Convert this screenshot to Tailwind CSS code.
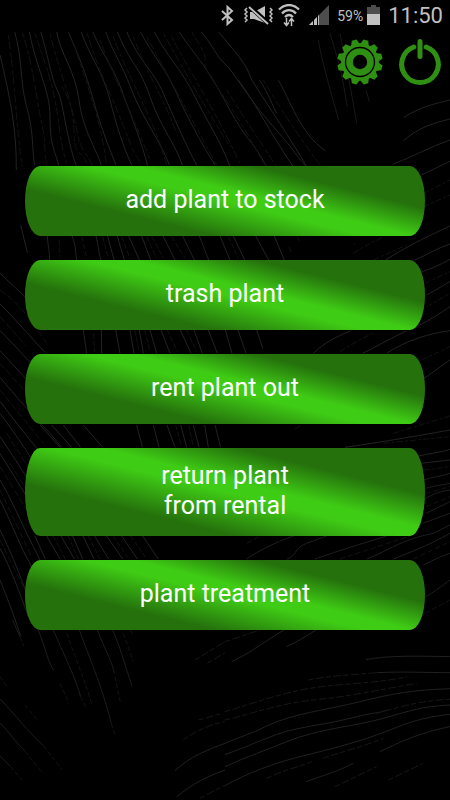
<!DOCTYPE html>
<html lang="en">
<head>
    <meta charset="UTF-8">
    <meta name="viewport" content="width=device-width, initial-scale=1.0">
    <title>Plant Stock</title>
    <script src="https://cdn.jsdelivr.net/npm/@tailwindcss/browser@4"></script>
</head>
<body class="bg-black font-[Roboto,sans-serif] text-white">
    <div class="relative isolate min-h-screen overflow-hidden">

        <!-- Leaf vein background -->
        <svg class="absolute inset-0 -z-10 h-full w-full" viewBox="0 0 1350 2400" preserveAspectRatio="xMidYMin slice" fill="none" stroke="#222222" stroke-width="3" aria-hidden="true">
            <!-- top left fan -->
            <path d="M0 165C30 290 50 390 49 510M44 95C70 190 58 240 80 320S95 440 104 495M88 95C110 210 150 270 150 350S160 440 176 495M122 95C145 170 155 240 172 270S200 420 228 495M170 95C180 160 225 210 237 300S285 440 304 495M205 95C240 180 255 210 280 300S330 450 348 495M243 95C270 170 310 220 330 300S370 440 395 495M278 95C310 170 340 200 365 270S430 440 442 495M317 95C340 160 360 180 395 270S480 420 508 495M352 95C390 190 420 200 450 290S520 420 547 495M380 95C420 190 460 210 490 280S560 440 590 495M421 95C460 170 500 210 530 280S610 440 645 495M463 95C500 170 540 200 585 290S660 420 690 500M538 95C570 150 610 180 675 303S750 410 800 500M604 95C640 140 650 170 676 193S740 290 820 380S880 460 920 500M715 240C760 300 830 430 880 500M755 240C800 310 880 430 918 496M655 95C700 150 740 190 755 240M778 240C800 270 810 300 830 340M835 240C870 300 900 400 977 453"/>
            <path stroke="#131313" stroke-dasharray="14 6 24 9" d="M25 105C45 240 45 340 66 500M68 100C100 200 110 300 125 370S130 440 140 490M105 100C130 180 150 220 165 300S180 430 200 490M150 100C180 230 220 300 222 390S240 440 260 490M186 260C215 310 222 350 232 400S262 460 276 495M225 140C250 230 300 340 320 495M262 100C300 230 330 270 375 390S410 450 420 495M300 120C340 230 400 350 450 480M340 110C380 220 430 300 480 430L500 495M400 110C440 220 480 270 530 400M440 110C490 200 560 330 620 440L650 495M490 100C540 190 620 330 690 440M515 110C560 200 640 320 720 490M575 95C600 140 620 160 615 190S700 310 790 490M680 270C730 350 790 440 830 500M790 240C830 310 890 400 960 495"/>
            <!-- strands under the toolbar icons -->
            <path stroke="#181818" d="M955 120C965 180 985 250 1016 360M990 100C1005 150 1018 190 1028 240L1042 320M1020 100C1035 180 1050 250 1070 370M1098 270L1108 305"/>
            <!-- strands between the first buttons -->
            <path d="M62 675L82 758M142 708C144 740 150 760 148 780M216 708C228 735 226 755 230 780M288 708C296 740 296 760 303 780M323 708L342 780M352 708L373 780M386 708L418 780M425 708L452 780M489 708L525 780M548 708L583 780M598 708L626 780M660 708L690 780M700 708L734 780M767 708L806 780M823 708L853 780M250 990L260 1060M304 990L305 1060M347 990L360 1060M390 990L402 1060M418 990L430 1060M450 990L470 1060M483 990L510 1060M541 990L573 1060M582 990L607 1060M625 990L652 1060M676 990L696 1060M714 990L738 1060M770 990L788 1045M410 1275L427 1342M460 1275L477 1342M501 1275L525 1342M542 1275L560 1342M580 1275L597 1342M614 1275L625 1342M645 1275L662 1342"/>
            <path stroke="#131313" stroke-dasharray="16 6" d="M178 720L180 770M246 710L260 775M308 710L325 775M365 710L390 775M440 710L470 775M456 710L490 775M515 710L555 775M685 710L715 775M892 710L902 730M867 740L873 755M280 1000L284 1055M405 990L417 1055M434 990L450 1055M502 990L532 1055M560 990L590 1055M527 1275L545 1340M566 1275L580 1340"/>
            <!-- left edge -->
            <path d="M0 820L75 890M0 912C40 950 90 1010 135 1057M0 992C50 1040 90 1090 130 1130M0 1052L95 1155M0 1132C50 1190 90 1240 150 1300L185 1342M0 1204C50 1270 90 1320 130 1370M0 1240C60 1320 90 1370 110 1400M0 1310C40 1370 60 1400 85 1440M0 1360L80 1490M120 1275L180 1342M190 1275L242 1342M250 1275L308 1342M155 1275L215 1342M0 1440C30 1490 60 1560 100 1640L120 1680M0 1500C40 1580 60 1640 95 1700M0 1590C30 1650 50 1700 80 1780M0 1645C30 1700 60 1780 85 1850M0 1740C20 1790 40 1840 62 1908"/>
            <path stroke="#131313" stroke-dasharray="20 8" d="M0 870C60 910 100 970 140 1030M0 950L80 1040M0 1090L90 1190M0 1170L130 1330M20 1300L90 1410M0 1400L80 1530M0 1470L95 1670M0 1620L75 1770M30 1390L80 1470"/>
            <!-- below the fourth button -->
            <path d="M105 1608L136 1677M140 1608L180 1677M183 1608L223 1677M218 1608L248 1677M249 1608L282 1677M284 1608L326 1677M320 1608L368 1677M365 1608L412 1677M428 1608L475 1677"/>
            <path stroke="#131313" stroke-dasharray="15 6" d="M160 1608L196 1677M204 1608L236 1677M265 1608L300 1677M340 1608L386 1677M392 1608L440 1677M422 1320L430 1342M520 1330L526 1342"/>
            <!-- bottom left -->
            <path stroke="#1c1c1c" d="M38 1860L60 1910M115 1890C135 1940 145 1990 162 2012M160 1890C190 1960 225 2030 242 2090M238 1890C270 1980 300 2040 334 2170M292 1890C315 1950 335 1980 343 2020M338 1890C360 1940 370 1980 396 2058M0 2096C50 2150 80 2190 130 2237M0 2168C30 2200 50 2230 75 2254M0 2268L32 2300"/>
            <path stroke="#131313" stroke-dasharray="14 7" d="M60 1910L72 1940M200 1900C225 1970 250 2030 275 2110M180 2050L207 2110M242 2090L260 2125M345 2030L362 2112M334 2170L345 2205M370 1900L400 1985M392 1890L402 1910M75 2115L112 2160M130 2237L185 2307M75 2254L128 2320M0 2030L20 2058M32 2300L66 2340"/>
            <!-- right edge -->
            <path d="M1212 352C1260 320 1310 310 1350 300M1210 422C1260 380 1300 370 1350 357M1180 492C1240 470 1290 440 1350 420M1262 526L1350 484M1156 780C1220 740 1280 710 1350 678M1245 780C1280 765 1310 745 1350 732M1265 816C1295 805 1320 795 1350 778M1280 885L1350 845M1250 980C1290 960 1320 940 1350 920M940 1060C970 1030 1010 1010 1050 993M1088 1060C1130 1040 1180 1010 1220 993M1160 1060C1220 1020 1290 1000 1350 992M1272 1135L1350 1080M1035 1342C1120 1330 1240 1310 1350 1290M1255 1368C1290 1360 1320 1358 1350 1348M1262 1390L1350 1380"/>
            <path stroke="#131313" stroke-dasharray="18 7 9 6" d="M1270 580L1350 540M1270 620L1350 585M1060 760C1090 740 1110 730 1148 712M1060 735L1065 730M1120 780L1220 735M1275 850L1350 815M1280 920L1350 880M1020 1055C1050 1035 1080 1020 1120 998M1265 1080L1350 1040M885 1287L905 1275M1180 1300L1350 1248M1270 1410L1350 1400M1150 1330L1350 1310"/>
            <path stroke="#1e1e1e" d="M1272 1440C1300 1430 1320 1430 1350 1420M1278 1465C1310 1455 1330 1455 1350 1450M1270 1500C1300 1480 1320 1475 1350 1470M1278 1540L1350 1505M1268 1570L1350 1540M740 1677C780 1650 820 1630 880 1608M860 1677C890 1670 880 1645 920 1630S960 1615 980 1608M945 1677C1020 1650 1090 1630 1160 1608M1100 1677C1170 1650 1200 1620 1300 1600L1350 1575M1180 1677C1220 1660 1280 1640 1350 1600M1270 1695C1300 1680 1320 1670 1350 1660M1278 1790C1310 1770 1330 1755 1350 1740"/>
            <path stroke="#131313" stroke-dasharray="16 8" d="M740 1630L780 1608M1278 1480L1350 1460M1278 1520L1350 1490M1020 1677L1230 1608M1275 1840L1350 1800M1240 1677L1350 1625"/>
            <!-- bottom right -->
            <path stroke="#202020" d="M695 1985C750 1960 800 1920 852 1890M860 1940C890 1925 920 1908 948 1890M1098 1979C1160 1966 1260 1968 1350 1970M1130 2018C1210 2014 1280 2018 1350 2018M525 2312C570 2270 620 2250 675 2230C720 2210 760 2200 800 2178C880 2140 980 2130 1080 2105S1240 2070 1350 2066M675 2264C740 2240 760 2230 800 2215C880 2180 950 2180 1050 2155S1120 2145 1160 2130M675 2300C740 2270 800 2250 860 2225C960 2185 1060 2180 1150 2155S1260 2120 1350 2115M530 2390C580 2350 620 2330 675 2310M675 2357C740 2320 820 2290 900 2270S1060 2230 1130 2205S1240 2155 1350 2143M918 2345C990 2320 1020 2310 1060 2290M1140 2255C1200 2225 1270 2195 1350 2180"/>
            <path stroke="#171717" stroke-dasharray="16 7 24 6" d="M585 1980L675 1925L780 1890M622 1990L675 1958M550 2220C590 2190 640 2170 675 2165M595 2160L660 2142M675 2135C760 2110 840 2080 930 2065S1140 2050 1220 2030M675 2160C760 2140 840 2110 940 2100S1080 2080 1250 2050M925 2040C980 2028 1050 2025 1130 2018M1130 2140C1200 2120 1270 2100 1350 2098M800 2335C850 2310 900 2300 935 2285M970 2275C1040 2250 1090 2240 1150 2215M1005 2360L1130 2300M600 2395L675 2355M1165 2340L1270 2290"/>
        </svg>

        <!-- Status bar -->
        <div class="flex h-8 items-center justify-end bg-black pr-[7px] text-[#c0c0c0]">
            <svg class="mr-2 h-6 w-[15px]" viewBox="0 0 15 24" fill="none" stroke="currentColor" stroke-width="2" role="img" aria-label="Bluetooth">
                <path d="M2 7L12 16L7.500 20V3L12 7L2 16"/>
            </svg>
            <svg class="mr-[5px] h-6 w-[30px]" viewBox="0 0 30 24" fill="none" stroke="currentColor" stroke-width="1.500" role="img" aria-label="Sound off">
                <path fill="currentColor" stroke="none" d="M7 8h4l11-6v17L11 15H7z"/>
                <path stroke="#000" stroke-width="4.500" d="M6 2L26 20"/>
                <path stroke-width="2" d="M6 3L25 20"/>
                <path d="M4 4l-2 2 2 2-2 2 2 2-2 2 2 2-2 2M27 4l2 2-2 2 2 2-2 2 2 2-2 2 2 2"/>
            </svg>
            <svg class="mr-[9px] h-6 w-[22px]" viewBox="0 0 22 24" fill="none" stroke="currentColor" stroke-width="2.300" role="img" aria-label="Wi-Fi">
                <path d="M1 5.500C7-.5 15-.5 21 5.500M4 9.500C8 5 14 5 18 9.500M7 13C9.500 10.500 12.500 10.500 15 13"/>
                <path stroke-width="1.500" d="M8.500 14v7M6 18.500l2.500 3 2.500-3M13.500 22v-7M11 17.500l2.500-3 2.500 3"/>
            </svg>
            <svg class="mr-2 h-6 w-5" viewBox="0 0 20 24" role="img" aria-label="Signal strength">
                <path fill="#4d4d4d" d="M20 1v20H0z"/>
                <path fill="currentColor" d="M10 11v10H0z"/>
                <path stroke="#000" d="M4.500 15v6M8.500 11v10"/>
            </svg>
            <span class="mr-1 text-sm">59%</span>
            <svg class="mr-2 h-6 w-[13px]" viewBox="0 0 13 24" role="img" aria-label="Battery">
                <path fill="#4d4d4d" d="M4 1h5v2h4v18H0V3h4z"/>
                <path fill="#c0c0c0" d="M0 10h13v11H0z"/>
            </svg>
            <time class="text-[22px] leading-8">11:50</time>
        </div>

        <!-- Toolbar -->
        <header class="flex justify-end gap-4 pt-[6px] pr-[9px]">
            <button type="button" aria-label="Settings" class="h-12 w-[46px] text-[#2f8f12]">
                <svg class="h-12 w-[46px]" viewBox="-23 -24 46 48" fill="currentColor" aria-hidden="true">
                    <circle r="18.800"/>
                    <g id="teeth">
                        <path id="tooth" transform="rotate(15)" d="M-4.500-17.500L-2.400-22.700H2.400L4.500-17.500z"/>
                        <use href="#tooth" transform="rotate(30)"/>
                        <use href="#tooth" transform="rotate(60)"/>
                    </g>
                    <use href="#teeth" transform="rotate(90)"/>
                    <use href="#teeth" transform="rotate(180)"/>
                    <use href="#teeth" transform="rotate(270)"/>
                    <circle r="14.500" fill="none" stroke="#000" stroke-width="1.300"/>
                    <circle r="7.200" fill="#000"/>
                </svg>
            </button>
            <button type="button" aria-label="Exit" class="h-12 w-[42px] text-[#2f8f12]">
                <svg class="h-12 w-[42px]" viewBox="0 0 42 48" fill="none" stroke="currentColor" stroke-width="5" stroke-linecap="round" aria-hidden="true">
                    <path d="M14.800 9A18.300 18.300 0 1 0 27.200 9"/>
                    <path d="M21 3.500V18.500"/>
                </svg>
            </button>
        </header>

        <!-- Menu -->
        <main class="mt-20 flex flex-col gap-6 px-[25px] pb-10 text-[25px] leading-[30px]">
            <button type="button" class="min-h-[70px] rounded-[15px/50%] bg-[linear-gradient(14deg,#25720c_28%,#3fcc15_50%,#3fcc15_57%,#25720c_75%)] px-6 pt-[13px] pb-[15px]">add plant to stock</button>
            <button type="button" class="min-h-[70px] rounded-[15px/50%] bg-[linear-gradient(14deg,#25720c_28%,#3fcc15_50%,#3fcc15_57%,#25720c_75%)] px-6 pt-[13px] pb-[15px]">trash plant</button>
            <button type="button" class="min-h-[70px] rounded-[15px/50%] bg-[linear-gradient(14deg,#25720c_28%,#3fcc15_50%,#3fcc15_57%,#25720c_75%)] px-6 pt-[13px] pb-[15px]">rent plant out</button>
            <button type="button" class="min-h-[70px] rounded-[15px/50%] bg-[linear-gradient(14deg,#25720c_28%,#3fcc15_50%,#3fcc15_57%,#25720c_75%)] px-6 pt-[13px] pb-[15px]">return plant<br>from rental</button>
            <button type="button" class="min-h-[70px] rounded-[15px/50%] bg-[linear-gradient(14deg,#25720c_28%,#3fcc15_50%,#3fcc15_57%,#25720c_75%)] px-6 pt-[13px] pb-[15px]">plant treatment</button>
        </main>
    </div>
</body>
</html>
